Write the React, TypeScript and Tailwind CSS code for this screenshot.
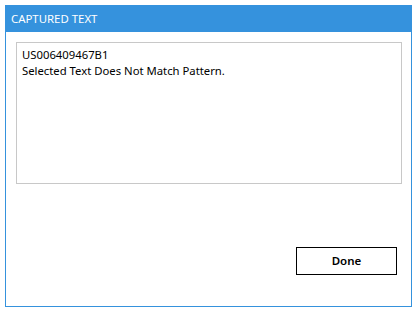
export default function App() {
  return (
    <div className="w-[415px] h-[312px] bg-white pt-[5px] pl-[5px]" style={{ fontFamily: '"Noto Sans", "Open Sans", sans-serif' }}>
      <div className="w-[407px] h-[302px] border border-t-0 border-[#3592dd] flex flex-col">
        <div className="h-[27px] -mx-px bg-[#3592dd] text-white text-[11.4px] flex items-center pl-[6px]">
          CAPTURED TEXT
        </div>
        <div className="pt-[10px] pl-[10px]">
          <div className="w-[386px] h-[142px] border border-[#c8c8c8] px-[5px] py-[4px] text-[11.3px] leading-[16px] text-black">
            <div>US006409467B1</div>
            <div>Selected Text Does Not Match Pattern.</div>
          </div>
        </div>
        <div className="flex-1" />
        <div className="flex justify-end pr-[14px] pb-[31px]">
          <button className="w-[101px] h-[28px] border border-black bg-white text-[11.5px] font-semibold text-black">
            Done
          </button>
        </div>
      </div>
    </div>
  );
}
